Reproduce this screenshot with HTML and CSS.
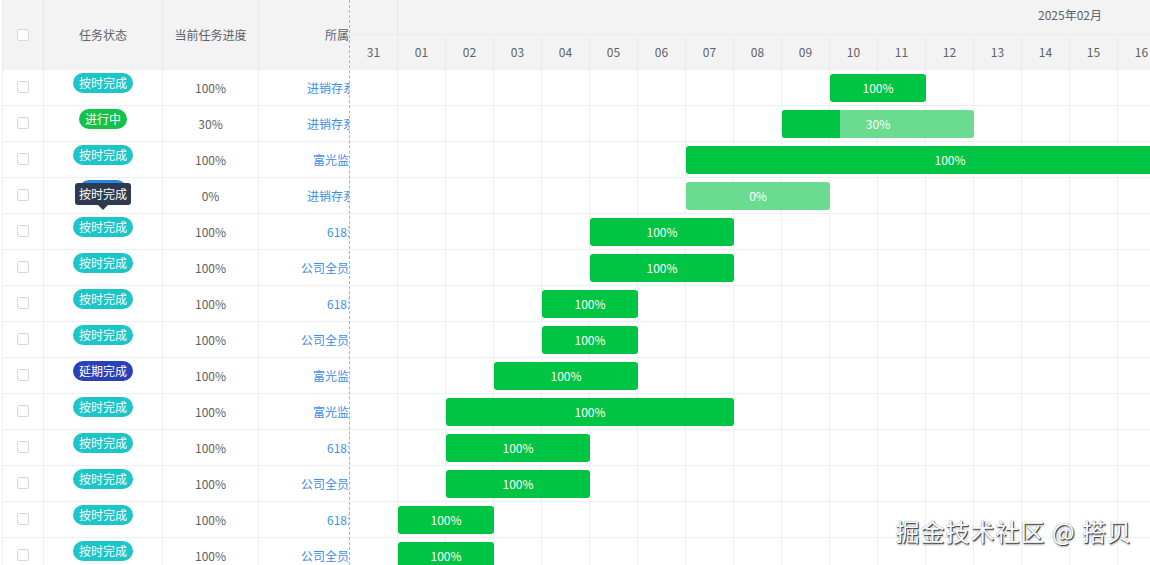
FILE: index.html
```html
<!DOCTYPE html>
<html lang="zh-CN"><head>
  <meta charset="UTF-8">
  <title>任务甘特图</title>
  <link rel="stylesheet" href="styles.css">
</head>
<body>
  <div class="board">

    <!-- left task table -->
    <div class="task-table">
      <div class="tr head">
        <div class="td c-check"><span class="check"></span></div>
        <div class="td c-status mid">任务状态</div>
        <div class="td c-progress">当前任务进度</div>
        <div class="td c-project">所属项目</div>
      </div>
      <div class="tr">
        <div class="td c-check"><span class="check"></span></div>
        <div class="td c-status"><span class="tag ontime">按时完成</span></div>
        <div class="td c-progress">100%</div>
        <div class="td c-project"><a class="link">进销存系统开发</a></div>
      </div>
      <div class="tr">
        <div class="td c-check"><span class="check"></span></div>
        <div class="td c-status"><span class="tag doing">进行中</span></div>
        <div class="td c-progress">30%</div>
        <div class="td c-project"><a class="link">进销存系统开发</a></div>
      </div>
      <div class="tr">
        <div class="td c-check"><span class="check"></span></div>
        <div class="td c-status"><span class="tag ontime">按时完成</span></div>
        <div class="td c-progress">100%</div>
        <div class="td c-project"><a class="link">富光监控系统</a></div>
      </div>
      <div class="tr">
        <div class="td c-check"><span class="check"></span></div>
        <div class="td c-status">
          <span class="tag todo">未开始</span>
          <div class="tooltip">按时完成</div>
        </div>
        <div class="td c-progress">0%</div>
        <div class="td c-project"><a class="link">进销存系统开发</a></div>
      </div>
      <div class="tr">
        <div class="td c-check"><span class="check"></span></div>
        <div class="td c-status"><span class="tag ontime">按时完成</span></div>
        <div class="td c-progress">100%</div>
        <div class="td c-project"><a class="link">618活动</a></div>
      </div>
      <div class="tr">
        <div class="td c-check"><span class="check"></span></div>
        <div class="td c-status"><span class="tag ontime">按时完成</span></div>
        <div class="td c-progress">100%</div>
        <div class="td c-project"><a class="link">公司全员培训计划</a></div>
      </div>
      <div class="tr">
        <div class="td c-check"><span class="check"></span></div>
        <div class="td c-status"><span class="tag ontime">按时完成</span></div>
        <div class="td c-progress">100%</div>
        <div class="td c-project"><a class="link">618活动</a></div>
      </div>
      <div class="tr">
        <div class="td c-check"><span class="check"></span></div>
        <div class="td c-status"><span class="tag ontime">按时完成</span></div>
        <div class="td c-progress">100%</div>
        <div class="td c-project"><a class="link">公司全员培训计划</a></div>
      </div>
      <div class="tr">
        <div class="td c-check"><span class="check"></span></div>
        <div class="td c-status"><span class="tag delay">延期完成</span></div>
        <div class="td c-progress">100%</div>
        <div class="td c-project"><a class="link">富光监控系统</a></div>
      </div>
      <div class="tr">
        <div class="td c-check"><span class="check"></span></div>
        <div class="td c-status"><span class="tag ontime">按时完成</span></div>
        <div class="td c-progress">100%</div>
        <div class="td c-project"><a class="link">富光监控系统</a></div>
      </div>
      <div class="tr">
        <div class="td c-check"><span class="check"></span></div>
        <div class="td c-status"><span class="tag ontime">按时完成</span></div>
        <div class="td c-progress">100%</div>
        <div class="td c-project"><a class="link">618活动</a></div>
      </div>
      <div class="tr">
        <div class="td c-check"><span class="check"></span></div>
        <div class="td c-status"><span class="tag ontime">按时完成</span></div>
        <div class="td c-progress">100%</div>
        <div class="td c-project"><a class="link">公司全员培训计划</a></div>
      </div>
      <div class="tr">
        <div class="td c-check"><span class="check"></span></div>
        <div class="td c-status"><span class="tag ontime">按时完成</span></div>
        <div class="td c-progress">100%</div>
        <div class="td c-project"><a class="link">618活动</a></div>
      </div>
      <div class="tr">
        <div class="td c-check"><span class="check"></span></div>
        <div class="td c-status"><span class="tag ontime">按时完成</span></div>
        <div class="td c-progress">100%</div>
        <div class="td c-project"><a class="link">公司全员培训计划</a></div>
      </div>
    </div>

    <div class="divider"></div>

    <!-- timeline -->
    <div class="gantt">
      <div class="g-head">
        <div class="g-month">
          <div class="pre"></div>
          <div class="mon">2025年02月</div>
        </div>
        <div class="g-days">
          <span>31</span><span>01</span><span>02</span><span>03</span><span>04</span><span>05</span>
          <span>06</span><span>07</span><span>08</span><span>09</span><span>10</span><span>11</span>
          <span>12</span><span>13</span><span>14</span><span>15</span><span>16</span>
        </div>
      </div>
      <div class="g-body">
        <div class="g-row"><div class="bar" style="left:480px;width:96px">100%</div></div>
        <div class="g-row"><div class="bar todo" style="left:432px;width:192px"><span class="done" style="width:30%"></span><span class="label">30%</span></div></div>
        <div class="g-row"><div class="bar" style="left:336px;width:528px">100%</div></div>
        <div class="g-row"><div class="bar todo" style="left:336px;width:144px">0%</div></div>
        <div class="g-row"><div class="bar" style="left:240px;width:144px">100%</div></div>
        <div class="g-row"><div class="bar" style="left:240px;width:144px">100%</div></div>
        <div class="g-row"><div class="bar" style="left:192px;width:96px">100%</div></div>
        <div class="g-row"><div class="bar" style="left:192px;width:96px">100%</div></div>
        <div class="g-row"><div class="bar" style="left:144px;width:144px">100%</div></div>
        <div class="g-row"><div class="bar" style="left:96px;width:288px">100%</div></div>
        <div class="g-row"><div class="bar" style="left:96px;width:144px">100%</div></div>
        <div class="g-row"><div class="bar" style="left:96px;width:144px">100%</div></div>
        <div class="g-row"><div class="bar" style="left:48px;width:96px">100%</div></div>
        <div class="g-row"><div class="bar" style="left:48px;width:96px">100%</div></div>
      </div>
    </div>

    <div class="watermark">掘金技术社区 @ 搭贝</div>
  </div>
</body></html>
```
FILE: styles.css
```css
body {
  margin: 0;
  font-family: "Noto Sans CJK SC", "Noto Sans", sans-serif;
  font-size: 12px;
  color: #606266;
  background: #fff;
  overflow: hidden;
}

.board {
  display: flex;
  height: 565px;
  position: relative;
  overflow: hidden;
}

/* task table */
.task-table {
  width: 347px;
  padding-left: 2px;
  overflow: hidden;
  flex: none;
}

.tr {
  display: flex;
  width: max-content;
  height: 35px;
  border-bottom: 1px solid #eeeff2;
  border-left: 1px solid #eeeff2;
}

.tr.head {
  height: 69px;
  background: #f3f3f3;
  border-left-color: #e8e8e8;
}

.td {
  flex: none;
  box-sizing: border-box;
  display: flex;
  align-items: center;
  justify-content: center;
  border-right: 1px solid #eeeff2;
  padding-bottom: 1px;
}

.head .td { border-right-color: #e8e8e8; padding-bottom: 0; }

.c-check { width: 41px; }
.c-status {
  width: 119px;
  align-items: flex-start;
  padding-top: 3px;
  position: relative;
}
.head .c-status { align-items: center; padding-top: 0; }
.c-progress { width: 96px; }
.c-project { width: 180px; border-right: none; }

.check {
  width: 12px;
  height: 12px;
  box-sizing: border-box;
  border: 1px solid #d4d7de;
  border-radius: 2px;
  background: #fff;
}

.link {
  color: #3d8fe6;
  white-space: nowrap;
}

.tag {
  height: 20px;
  line-height: 20px;
  padding: 0 6px;
  border-radius: 10px;
  color: #fff;
  white-space: nowrap;
}
.tag.ontime { background: #1cc5c8; }
.tag.doing { background: #13c24b; }
.tag.delay { background: #2b3fb8; }
.tag.todo { background: #2a86e0; margin-top: -1px; }

.tooltip {
  position: absolute;
  left: 31px;
  top: 5px;
  height: 22px;
  line-height: 22px;
  padding: 0 4px;
  background: #2e3b4e;
  color: #fff;
  border-radius: 3px;
  white-space: nowrap;
}
.tooltip::after {
  content: "";
  position: absolute;
  left: 23px;
  bottom: -5px;
  border-left: 5px solid transparent;
  border-right: 5px solid transparent;
  border-top: 5px solid #2e3b4e;
}

.divider {
  flex: none;
  width: 0;
  border-left: 1px dashed #efa83c;
}

/* timeline */
.gantt {
  flex: 1;
  overflow: hidden;
}

.g-head {
  background: #f3f3f3;
  border-bottom: 1px solid #eeeff2;
  width: max-content;
}

.g-month {
  display: flex;
  height: 34px;
  border-bottom: 1px solid #ebebeb;
}
.g-month .pre {
  width: 48px;
  box-sizing: border-box;
  border-right: 1px solid #e6e6e6;
}
.g-month .mon {
  width: 1344px;
  display: flex;
  align-items: center;
  justify-content: center;
  padding-bottom: 5px;
  box-sizing: border-box;
}

.g-days {
  display: flex;
  height: 34px;
}
.g-days span {
  width: 48px;
  box-sizing: border-box;
  border-right: 1px solid #ececec;
  display: flex;
  align-items: center;
  justify-content: center;
  padding-bottom: 2px;
}

.g-row {
  position: relative;
  height: 35px;
  border-bottom: 1px solid #eeeff2;
  background-image: linear-gradient(to right, transparent 47px, #eeeff2 47px);
  background-size: 48px 100%;
}

.bar {
  position: absolute;
  top: 4px;
  height: 28px;
  box-sizing: border-box;
  padding-bottom: 2px;
  border-radius: 3px;
  background: #00c444;
  color: #fff;
  display: flex;
  align-items: center;
  justify-content: center;
  overflow: hidden;
}
.bar.todo { background: #6bdc8f; }
.bar .done {
  position: absolute;
  left: 0;
  top: 0;
  bottom: 0;
  background: #00c444;
}
.bar .label { position: relative; }

.watermark {
  position: absolute;
  right: 18px;
  top: 513px;
  font-size: 24px;
  color: #fff;
  letter-spacing: 1px;
  text-shadow: 1px 1px 0 #4a4a4a, 0 0 1px #666, 1px 2px 2px rgba(0, 0, 0, 0.35);
}
```
